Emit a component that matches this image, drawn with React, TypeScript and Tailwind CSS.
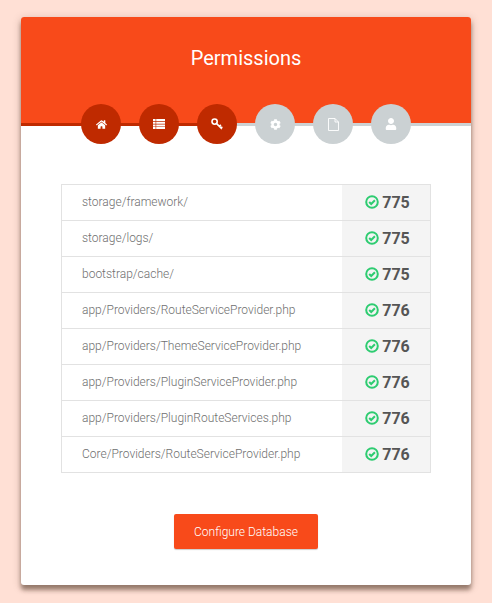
import React from 'react';
import { FaHome, FaCog, FaUser } from 'react-icons/fa';

const ListIcon = () => (
  <svg width="12" height="10" viewBox="0 0 12 10" fill="currentColor">
    <path d="M0 0h2.6v2H0zM3.2 0H12v2H3.2zM0 2.7h2.6v2H0zM3.2 2.7H12v2H3.2zM0 5.4h2.6v2H0zM3.2 5.4H12v2H3.2zM0 8.1h2.6V10H0zM3.2 8.1H12V10H3.2z" />
  </svg>
);

const KeyIcon = () => (
  <svg width="12" height="12" viewBox="0 0 12 12" fill="none" stroke="currentColor">
    <circle cx="3.6" cy="3.6" r="2.6" strokeWidth="1.6" />
    <path d="M5.6 5.6L11 11M8.4 8.4L9.9 6.9M10 10L11.3 8.7" strokeWidth="1.6" />
  </svg>
);

const FileIcon = () => (
  <svg width="11" height="13" viewBox="0 0 11 13" fill="none" stroke="currentColor" strokeWidth="0.9">
    <path d="M0.5 0.5H7L10.5 4V12.5H0.5zM7 0.5V4H10.5" />
  </svg>
);

const CheckIcon = () => (
  <svg width="14" height="14" viewBox="0 0 14 14" fill="none" stroke="#2ecc71" strokeWidth="2" className="-mt-[1px]">
    <circle cx="7" cy="7" r="5.8" />
    <path d="M4.2 7L6.2 9L9.9 5.3" />
  </svg>
);

const steps = [
  { icon: <FaHome size={11} />, done: true },
  { icon: <ListIcon />, done: true },
  { icon: <KeyIcon />, done: true },
  { icon: <FaCog size={11} />, done: false },
  { icon: <FileIcon />, done: false },
  { icon: <FaUser size={12} />, done: false },
];

const rows = [
  { path: 'storage/framework/', mode: '775' },
  { path: 'storage/logs/', mode: '775' },
  { path: 'bootstrap/cache/', mode: '775' },
  { path: 'app/Providers/RouteServiceProvider.php', mode: '776' },
  { path: 'app/Providers/ThemeServiceProvider.php', mode: '776' },
  { path: 'app/Providers/PluginServiceProvider.php', mode: '776' },
  { path: 'app/Providers/PluginRouteServices.php', mode: '776' },
  { path: 'Core/Providers/RouteServiceProvider.php', mode: '776' },
];

export default function App() {
  return (
    <div className="h-[603px] overflow-hidden bg-[#ffe0d5] pt-[17px] px-[21px] font-['Roboto',sans-serif]">
      <div className="w-[450px] h-[568px] bg-white rounded-[3px] shadow-[0_5px_4px_rgba(60,35,20,0.45),0_2px_8px_rgba(60,35,20,0.25)] overflow-hidden">
        {/* Header */}
        <div className="h-[106px] bg-[#f84a1a] pt-[27px] text-center text-white text-xl leading-[28px]">
          Permissions
        </div>
        <div className="flex h-[3px]">
          <div className="w-[196px] bg-[#bf2a00]"></div>
          <div className="flex-1 bg-[#cdd2d4]"></div>
        </div>

        {/* Steps */}
        <div className="flex justify-center gap-[18px] -mt-[22px] relative">
          {steps.map(({ icon, done }, i) => (
            <div
              key={i}
              className={`w-10 h-10 rounded-full flex items-center justify-center text-white ${done ? 'bg-[#bf2a00]' : 'bg-[#cbd1d3]'}`}
            >
              {icon}
            </div>
          ))}
        </div>

        {/* Table */}
        <div className="mt-10 mx-10 border border-[#e2e2e2] border-b-0">
          {rows.map((row) => (
            <div key={row.path} className="flex h-9 border-b border-[#e2e2e2]">
              <div className="flex-1 pl-5 pb-[2px] flex items-center text-xs font-light text-[#6f6f6f]">{row.path}</div>
              <div className="w-[88px] bg-[#f4f4f4] pl-[3px] flex items-center justify-center gap-[3px] text-[#555] font-bold text-base">
                <CheckIcon />
                {row.mode}
              </div>
            </div>
          ))}
        </div>

        {/* Action */}
        <div className="flex justify-center mt-[41px]">
          <button className="w-36 h-[35px] bg-[#f84a1a] rounded-[2px] text-white text-xs font-light shadow-[0_1px_1px_rgba(0,0,0,0.2)]">
            Configure Database
          </button>
        </div>
      </div>
    </div>
  );
}
